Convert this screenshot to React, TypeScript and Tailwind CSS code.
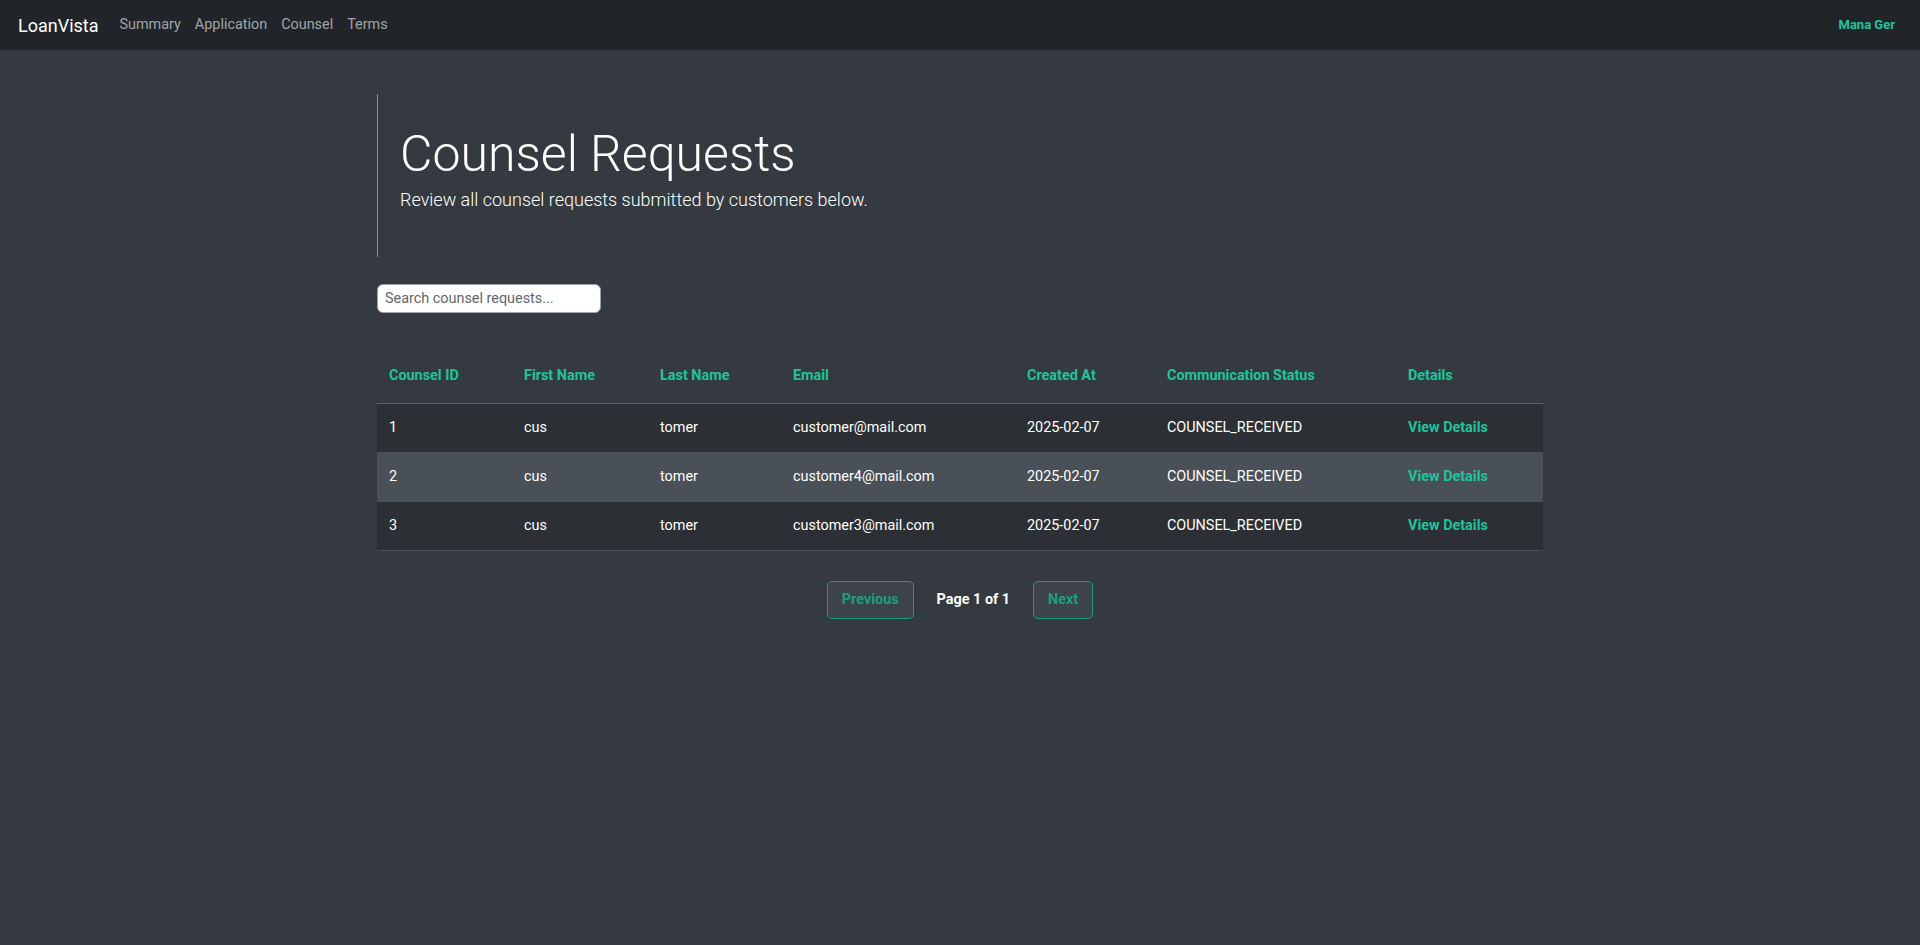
import React from "react";

const rows = [
  { id: 1, first: "cus", last: "tomer", email: "customer@mail.com", created: "2025-02-07", status: "COUNSEL_RECEIVED" },
  { id: 2, first: "cus", last: "tomer", email: "customer4@mail.com", created: "2025-02-07", status: "COUNSEL_RECEIVED" },
  { id: 3, first: "cus", last: "tomer", email: "customer3@mail.com", created: "2025-02-07", status: "COUNSEL_RECEIVED" },
];

export default function App() {
  return (
    <div className="min-h-[945px] bg-[#343a40] font-['Roboto',sans-serif] text-white">
      <nav className="h-[50px] bg-[#212529] flex items-center pl-[18px] pr-[25px]">
        <span className="text-[18px] text-white mr-[14px]">LoanVista</span>
        <div className="flex text-[14.4px] text-[#a2a4a7]">
          <a className="px-[7px]">Summary</a>
          <a className="px-[7px]">Application</a>
          <a className="px-[7px]">Counsel</a>
          <a className="px-[7px]">Terms</a>
        </div>
        <span className="ml-auto text-[13px] font-bold text-[#1fc49c]">Mana Ger</span>
      </nav>

      <main className="w-[1166px] mx-auto">
        <div className="mt-[44px] border-l border-[#1fc49c] pl-[22px] pt-[30px] pb-[44px]">
          <h1 className="text-[50px] font-light leading-[1.2] text-white">Counsel Requests</h1>
          <p className="mt-[2px] text-[18px] font-light leading-[1.5] text-white">
            Review all counsel requests submitted by customers below.
          </p>
        </div>

        <input
          type="text"
          placeholder="Search counsel requests..."
          className="mt-[27px] block w-[224px] h-[29px] rounded-[6px] border border-[#9ca3a9] bg-white px-[7px] text-[14.4px] text-[#212529] placeholder:text-[#5f666d] outline-none"
        />

        <table className="mt-[37px] w-[1166px] table-fixed border-collapse text-[14.4px]">
          <colgroup>
            <col className="w-[135px]" />
            <col className="w-[136px]" />
            <col className="w-[133px]" />
            <col className="w-[234px]" />
            <col className="w-[140px]" />
            <col className="w-[241px]" />
            <col className="w-[147px]" />
          </colgroup>
          <thead>
            <tr className="h-[53px] border-b border-[#5a6066] text-left text-[#1fc49c] font-bold">
              <th className="pl-[12px] font-bold">Counsel ID</th>
              <th className="pl-[12px] font-bold">First Name</th>
              <th className="pl-[12px] font-bold">Last Name</th>
              <th className="pl-[12px] font-bold">Email</th>
              <th className="pl-[12px] font-bold">Created At</th>
              <th className="pl-[12px] font-bold">Communication Status</th>
              <th className="pl-[12px] font-bold">Details</th>
            </tr>
          </thead>
          <tbody>
            {rows.map((r, i) => (
              <tr
                key={r.id}
                className={
                  i === 1
                    ? "h-[49px] bg-[#4a5057] border-b border-[#4a5057]"
                    : "h-[49px] bg-[#2c3034] border-b border-[#4a5057]"
                }
              >
                <td className="pl-[12px]">{r.id}</td>
                <td className="pl-[12px]">{r.first}</td>
                <td className="pl-[12px]">{r.last}</td>
                <td className="pl-[12px]">{r.email}</td>
                <td className="pl-[12px]">{r.created}</td>
                <td className="pl-[12px]">{r.status}</td>
                <td className="pl-[12px]">
                  <a className="font-bold text-[#1fc49c]">View Details</a>
                </td>
              </tr>
            ))}
          </tbody>
        </table>

        <div className="mt-[30px] flex items-center justify-center gap-[23px]">
          <button className="h-[38px] px-[14px] rounded-[5px] border border-[#1a9a7c] bg-[#3d434a] text-[14.4px] font-bold text-[#1b9e80]">
            Previous
          </button>
          <span className="text-[14.4px] font-bold text-white">Page 1 of 1</span>
          <button className="h-[38px] px-[14px] rounded-[5px] border border-[#1a9a7c] bg-[#3d434a] text-[14.4px] font-bold text-[#1b9e80]">
            Next
          </button>
        </div>
      </main>
    </div>
  );
}
